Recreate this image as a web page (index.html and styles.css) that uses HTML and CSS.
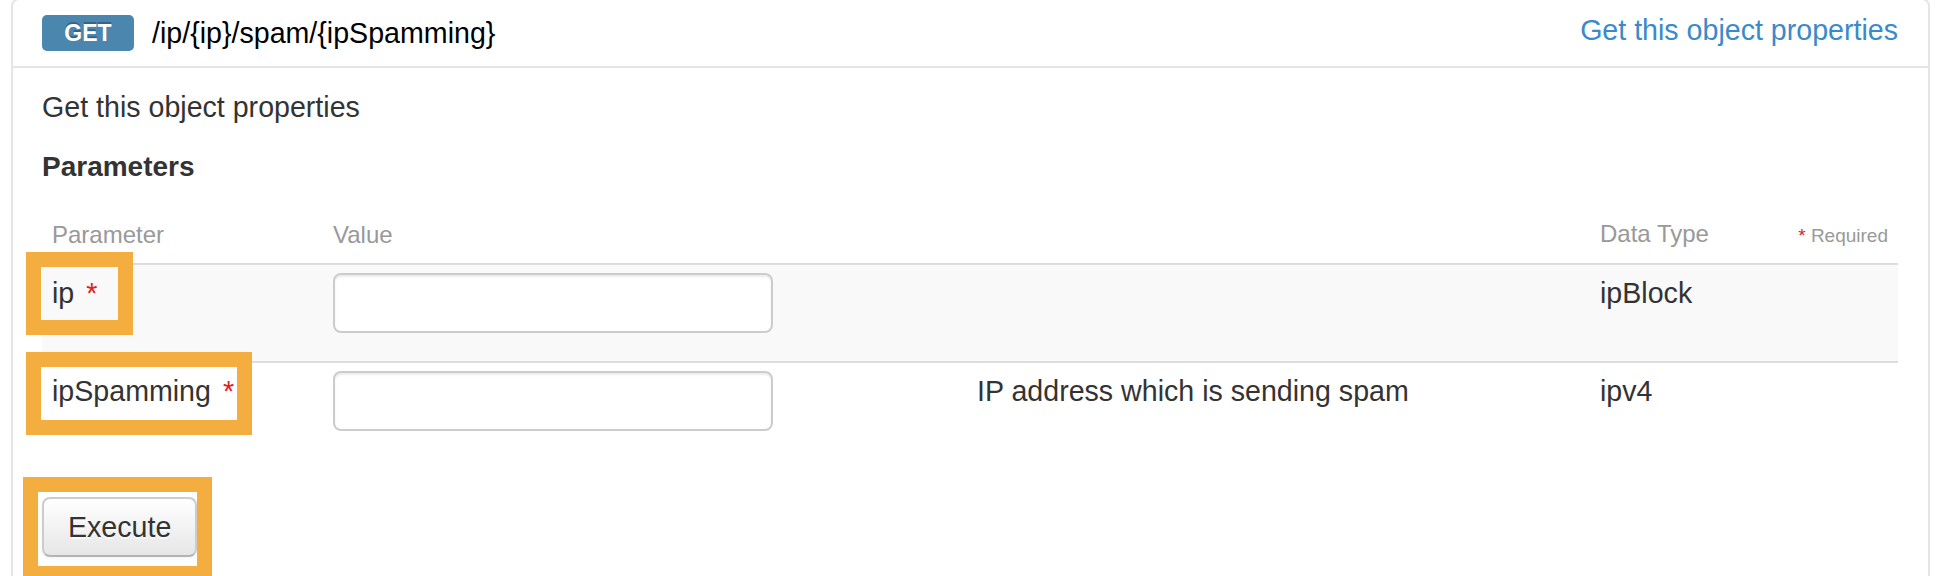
FILE: index.html
```html
<!DOCTYPE html>
<html lang="en">
<head>
<meta charset="utf-8">
<title>GET /ip/{ip}/spam/{ipSpamming}</title>
<link rel="stylesheet" href="styles.css">
</head>
<body>
<div class="page">
  <div class="op">
    <div class="op-head">
      <span class="verb">GET</span>
      <span class="path">/ip/{ip}/spam/{ipSpamming}</span>
      <a class="summary" href="#">Get this object properties</a>
    </div>
    <div class="op-body">
      <p class="desc">Get this object properties</p>
      <h4 class="section-title">Parameters</h4>
      <table class="params">
        <colgroup>
          <col class="c-name">
          <col class="c-value">
          <col class="c-desc">
          <col class="c-type">
        </colgroup>
        <thead>
          <tr>
            <th>Parameter</th>
            <th>Value</th>
            <th></th>
            <th>
              <div class="type-head">
                <span>Data Type</span>
                <span class="req-note"><span class="req">*</span> Required</span>
              </div>
            </th>
          </tr>
        </thead>
        <tbody>
          <tr class="odd">
            <td class="name">ip <span class="req">*</span></td>
            <td><input class="field" type="text"></td>
            <td></td>
            <td>ipBlock</td>
          </tr>
          <tr>
            <td class="name">ipSpamming <span class="req">*</span></td>
            <td><input class="field" type="text"></td>
            <td>IP address which is sending spam</td>
            <td>ipv4</td>
          </tr>
        </tbody>
      </table>
      <button class="btn" type="button">Execute</button>
    </div>
  </div>
  <div class="hl hl-ip"></div>
  <div class="hl hl-spam"></div>
  <div class="hl hl-exec"></div>
</div>
</body>
</html>
```

FILE: styles.css
```css
* {
  box-sizing: border-box;
}

html, body {
  margin: 0;
  padding: 0;
  background: #fff;
}

body {
  font-family: "Liberation Sans", Arial, Helvetica, sans-serif;
  font-size: 28.6px;
  line-height: 40px;
  color: #333;
  overflow: hidden;
}

.page {
  display: flow-root;
  position: relative;
  width: 1940px;
  height: 576px;
  overflow: hidden;
}

.op {
  margin: -2px 10px 0 11px;
  border: 2px solid #e5e5e5;
  border-radius: 8px;
  background: #fff;
}

.op-head {
  display: flex;
  align-items: center;
  height: 68px;
  padding: 0 30px 0 29px;
  border-bottom: 2px solid #e5e5e5;
}

.verb {
  display: inline-block;
  width: 92px;
  height: 36px;
  line-height: 36px;
  text-align: center;
  font-size: 23px;
  font-weight: bold;
  color: #fff;
  background: #4a86ad;
  border-radius: 5px;
  text-shadow: 0 -2px 0 rgba(0, 0, 0, 0.25);
}

.path {
  margin-left: 18px;
  color: #000;
}

.summary {
  margin-left: auto;
  margin-bottom: 6px;
  color: #3a8acb;
  text-decoration: none;
}

.op-body {
  padding: 19px 30px 60px 29px;
}

.desc {
  margin: 0;
}

.section-title {
  margin: 20px 0 0;
  font-size: 28px;
  line-height: 40px;
  font-weight: bold;
}

.params {
  width: 100%;
  margin-top: 19px;
  border-collapse: collapse;
  table-layout: fixed;
}

.c-name { width: 281px; }
.c-value { width: 644px; }
.c-desc { width: 623px; }

.params th {
  padding: 8px 10px 7px;
  font-size: 24px;
  line-height: 40px;
  font-weight: normal;
  color: #999;
  text-align: left;
  border-bottom: 2px solid #ddd;
}

.type-head {
  display: flex;
  justify-content: space-between;
  align-items: baseline;
}

.req-note {
  font-size: 19px;
}

.params td {
  padding: 8px 10px;
  vertical-align: top;
  line-height: 40px;
}

.params tr.odd td {
  background: #f9f9f9;
  border-bottom: 2px solid #ddd;
}

.req {
  color: #dd2222;
}

.name .req {
  margin-left: 4px;
}

.field {
  display: block;
  width: 440px;
  height: 60px;
  margin: 0 0 20px;
  padding: 8px 12px;
  font: inherit;
  background: #fff;
  border: 2px solid #ccc;
  border-radius: 8px;
  box-shadow: inset 0 2px 2px rgba(0, 0, 0, 0.075);
}

.btn {
  display: block;
  height: 60px;
  margin-top: 38px;
  padding: 0 24px;
  font-family: inherit;
  font-size: 28.6px;
  line-height: 40px;
  color: #333;
  background: linear-gradient(#ffffff, #e6e6e6);
  border: 2px solid #ccc;
  border-bottom-color: #b3b3b3;
  border-radius: 8px;
  text-shadow: 0 2px 2px rgba(255, 255, 255, 0.75);
  box-shadow: inset 0 2px 0 rgba(255, 255, 255, 0.2), 0 2px 4px rgba(0, 0, 0, 0.05);
}

.hl {
  position: absolute;
  border: 15px solid #f3ae3f;
  pointer-events: none;
}

.hl-ip {
  left: 26px;
  top: 252px;
  width: 107px;
  height: 83px;
}

.hl-spam {
  left: 26px;
  top: 352px;
  width: 226px;
  height: 83px;
}

.hl-exec {
  left: 23px;
  top: 477px;
  width: 189px;
  height: 104px;
}
```
